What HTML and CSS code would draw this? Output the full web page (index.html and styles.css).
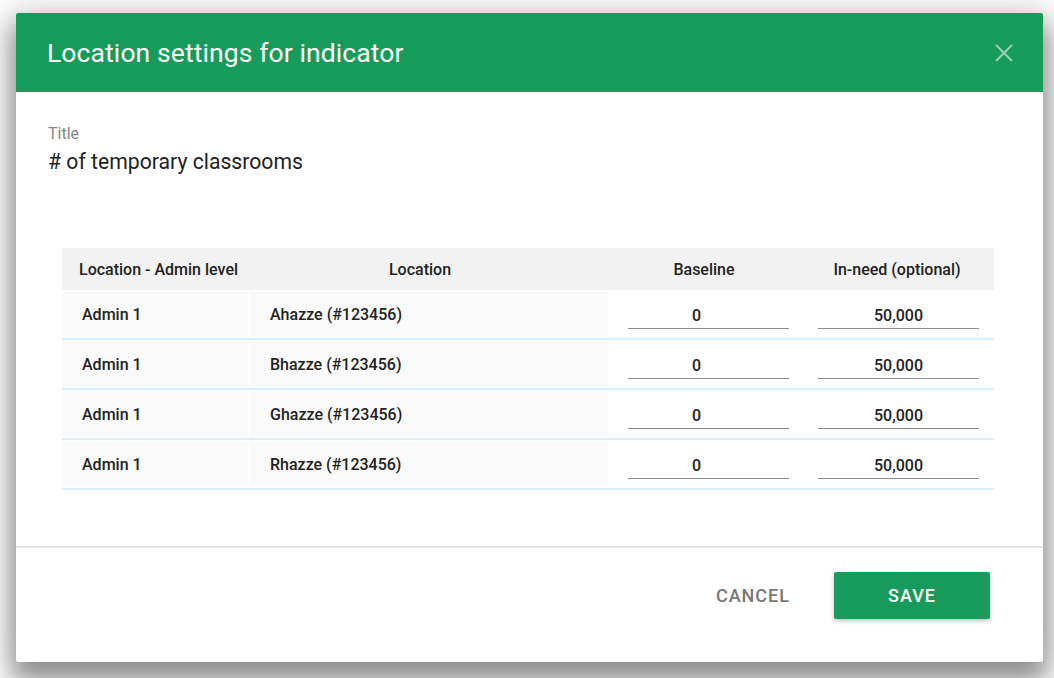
FILE: index.html
```html
<!DOCTYPE html>
<html>
<head>
<meta charset="utf-8">
<link rel="stylesheet" href="styles.css">
</head>
<body>
<div class="dialog">
  <div class="dlg-header">
    <h1 class="dlg-title">Location settings for indicator</h1>
    <svg class="close" width="18" height="18" viewBox="0 0 18 18"><path d="M1 1L17 17M17 1L1 17" stroke="currentColor" stroke-width="2" fill="none"/></svg>
  </div>
  <div class="dlg-body">
    <div class="field-label">Title</div>
    <div class="field-value"># of temporary classrooms</div>
    <div class="table">
      <div class="thead">
        <div class="th c1">Location - Admin level</div>
        <div class="th c2">Location</div>
        <div class="th c3">Baseline</div>
        <div class="th c4">In-need (optional)</div>
      </div>
      <div class="row">
        <div class="td c1">Admin 1</div>
        <div class="td c2">Ahazze (#123456)</div>
        <div class="tdi c3"><div class="input base">0</div></div>
        <div class="tdi c4"><div class="input">50,000</div></div>
      </div>
      <div class="row">
        <div class="td c1">Admin 1</div>
        <div class="td c2">Bhazze (#123456)</div>
        <div class="tdi c3"><div class="input base">0</div></div>
        <div class="tdi c4"><div class="input">50,000</div></div>
      </div>
      <div class="row">
        <div class="td c1">Admin 1</div>
        <div class="td c2">Ghazze (#123456)</div>
        <div class="tdi c3"><div class="input base">0</div></div>
        <div class="tdi c4"><div class="input">50,000</div></div>
      </div>
      <div class="row">
        <div class="td c1">Admin 1</div>
        <div class="td c2">Rhazze (#123456)</div>
        <div class="tdi c3"><div class="input base">0</div></div>
        <div class="tdi c4"><div class="input">50,000</div></div>
      </div>
    </div>
  </div>
  <div class="dlg-footer">
    <button class="btn-cancel">CANCEL</button>
    <button class="btn-save">SAVE</button>
  </div>
</div>
</body>
</html>
```

FILE: styles.css
```css
* { box-sizing: border-box; }
html, body { margin: 0; padding: 0; }
body {
  width: 1054px;
  height: 678px;
  overflow: hidden;
  background: #ffffff;
  font-family: Roboto, "Noto Sans", Arial, sans-serif;
  color: #212121;
}
.dialog {
  margin: 13px 0 0 16px;
  width: 1027px;
  height: 649px;
  background: #fff;
  display: flex;
  flex-direction: column;
  box-shadow: 0 16px 24px 4px rgba(0,0,0,.36), 0 4px 40px 8px rgba(0,0,0,.16);
  border-radius: 2px;
}
.dlg-header {
  height: 79px;
  flex: none;
  background: #179b5a;
  display: flex;
  align-items: center;
  justify-content: space-between;
  padding: 0 30px 0 31px;
  border-radius: 2px 2px 0 0;
}
.dlg-title {
  margin: 0;
  font-size: 26.5px;
  font-weight: 400;
  color: #fff;
  letter-spacing: 0.1px;
}
.close {
  color: rgba(255,255,255,.55);
}
.dlg-body {
  flex: 1;
  padding: 32px 49px 0 32px;
  border-bottom: 2px solid #e4e4e4;
}
.field-label {
  font-size: 16px;
  line-height: 19px;
  color: #858585;
}
.field-value {
  margin-top: 6px;
  font-size: 21.2px;
  line-height: 25px;
  color: #222;
}
.table {
  margin: 74px 0 0 14px;
  font-size: 16px;
  font-weight: 500;
  color: #222;
}
.thead {
  display: flex;
  height: 42px;
  background: #f2f2f2;
  align-items: center;
}
.c1 { width: 186px; }
.c2 { width: 360px; }
.c3 { width: 192px; }
.c4 { width: 194px; }
.th.c1 { padding-left: 17px; }
.th.c2 { text-align: center; padding-right: 16px; }
.th.c3 { text-align: center; }
.th.c4 { text-align: center; }
.row {
  display: flex;
  padding: 2px 0 2px;
  border-bottom: 2px solid #d9eefa;
}
.td {
  height: 44px;
  background: #fafafa;
  display: flex;
  align-items: center;
  padding-left: 20px;
}
.td.c1 { margin-right: 2px; width: 186px; }
.td.c2 { width: 358px; }
.tdi {
  height: 44px;
  display: flex;
  align-items: flex-end;
  padding-bottom: 7px;
}
.tdi.c3 { padding-left: 20px; }
.tdi.c4 { padding-left: 18px; }
.input {
  width: 161px;
  height: 28px;
  padding-top: 3px;
  border-bottom: 1px solid #8c8c8c;
  text-align: center;
  font-size: 16px;
  line-height: 24px;
  font-weight: 500;
  color: #222;
}
.input.base { padding-right: 24px; }
.dlg-footer {
  flex: none;
  height: 114px;
  display: flex;
  align-items: flex-start;
  justify-content: flex-end;
  padding: 24px 53px 0 0;
  gap: 44px;
}
button {
  font-family: Roboto, "Noto Sans", Arial, sans-serif;
  font-size: 18px;
  font-weight: 500;
  letter-spacing: 1px;
  border: none;
  cursor: pointer;
}
.btn-cancel {
  background: transparent;
  color: #777;
  padding: 0;
  height: 47px;
}
.btn-save {
  width: 156px;
  height: 47px;
  background: #179b5a;
  color: #fff;
  border-radius: 2px;
  box-shadow: 0 2px 4px rgba(0,0,0,.25);
}
```
